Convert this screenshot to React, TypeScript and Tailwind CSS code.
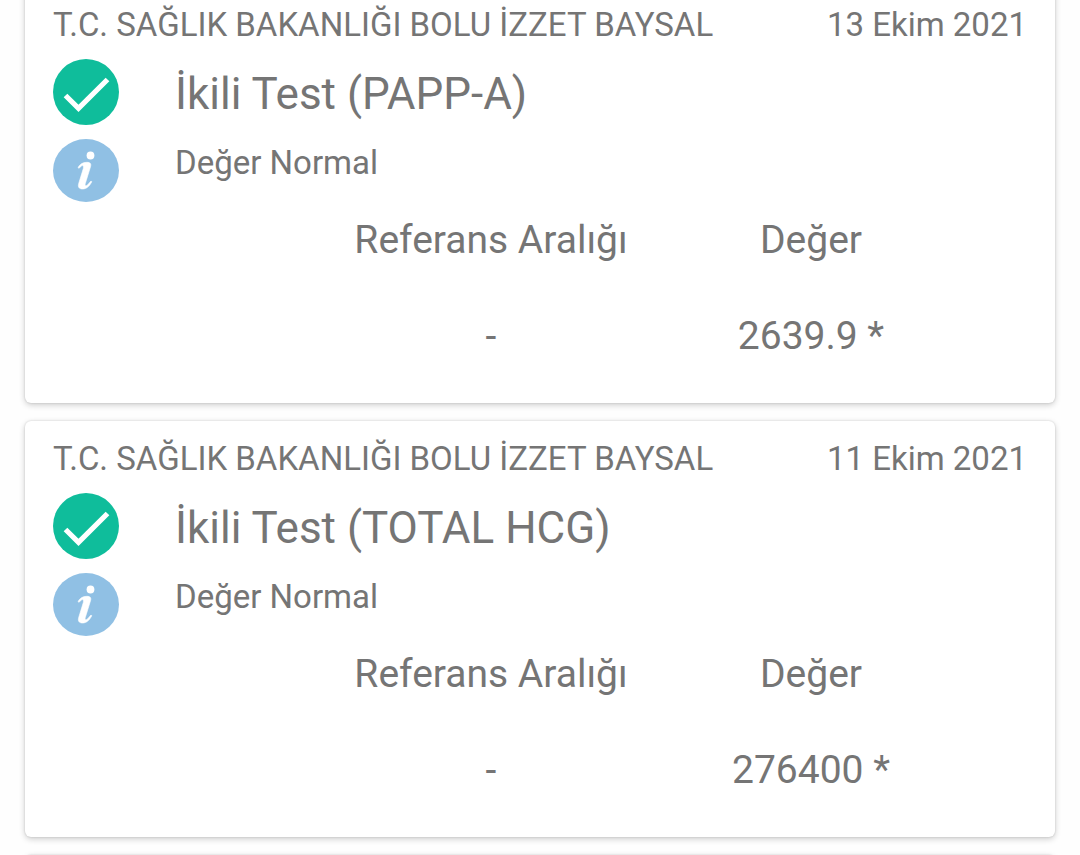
const results = [
  { id: 1, hospital: 'T.C. SAĞLIK BAKANLIĞI BOLU İZZET BAYSAL', date: '13 Ekim 2021', name: 'İkili Test (PAPP-A)', status: 'Değer Normal', range: '-', value: '2639.9 *' },
  { id: 2, hospital: 'T.C. SAĞLIK BAKANLIĞI BOLU İZZET BAYSAL', date: '11 Ekim 2021', name: 'İkili Test (TOTAL HCG)', status: 'Değer Normal', range: '-', value: '276400 *' },
]

function CheckIcon() {
  return (
    <svg aria-hidden="true" viewBox="0 0 66 66" className="size-[66px]">
      <circle cx="33" cy="33" r="33" fill="#0fbd9b" />
      <path d="M12.500 36.500 25.500 49.300 54.500 20.500" fill="none" stroke="#fff" strokeWidth="5.200" />
    </svg>
  )
}

function InfoIcon() {
  return (
    <svg aria-hidden="true" viewBox="0 0 66 63" className="h-[63px] w-[66px]">
      <ellipse cx="33" cy="31.500" rx="33" ry="31.500" fill="#90c0e4" />
      <circle cx="37.500" cy="16.500" r="3.900" fill="#fff" />
      <path
        d="M25 28.500C27 25 30 23.300 34 23.300C37.500 23.300 38.300 25 37.500 27.800L32.300 44.500C31.600 47 33 47.300 34.500 46L38 42L38.800 42.700C36.500 47.200 33.500 50 29.500 50C26 50 24.700 47.800 25.700 44.500L30.300 29.500C31 27 30 26 28.500 27L25.900 29.300Z"
        fill="#fff"
        stroke="#fff"
        strokeWidth="0.600"
      />
    </svg>
  )
}

export default function App() {
  return (
    <main className="h-screen overflow-hidden bg-[#fefefe] px-[25px] font-['Roboto',sans-serif] text-[#757575]">
      <div className="-mt-[13px] flex flex-col gap-[18px]">
        {results.map((result) => (
          <article key={result.id} className="shrink-0 rounded-md bg-white px-7 pt-4 pb-[43px] shadow-[0_2px_6px_rgba(0,0,0,0.2),0_0_2px_rgba(0,0,0,0.16)]">
            <header className="flex justify-between text-[33px]/[44px]">
              <p>{result.hospital}</p>
              <time>{result.date}</time>
            </header>
            <div className="mt-3 flex gap-14">
              <div className="flex flex-col gap-3.5">
                <CheckIcon />
                <button type="button" aria-label="Bilgi">
                  <InfoIcon />
                </button>
              </div>
              <div>
                <h2 className="text-[44px]/[70px]">{result.name}</h2>
                <p className="text-[33px]/[68px]">{result.status}</p>
              </div>
            </div>
            <div className="mt-3.5 pr-14">
              <table className="w-full table-fixed text-center text-[39px]/[48px]">
                <thead>
                  <tr>
                    <td className="w-[278px]" />
                    <th scope="col" className="font-normal">Referans Aralığı</th>
                    <th scope="col" className="font-normal">Değer</th>
                  </tr>
                </thead>
                <tbody>
                  <tr>
                    <td />
                    <td className="pt-12">{result.range}</td>
                    <td className="pt-12">{result.value}</td>
                  </tr>
                </tbody>
              </table>
            </div>
          </article>
        ))}
        <div className="h-20 shrink-0 rounded-md bg-white shadow-[0_2px_6px_rgba(0,0,0,0.2),0_0_2px_rgba(0,0,0,0.16)]" />
      </div>
    </main>
  )
}
